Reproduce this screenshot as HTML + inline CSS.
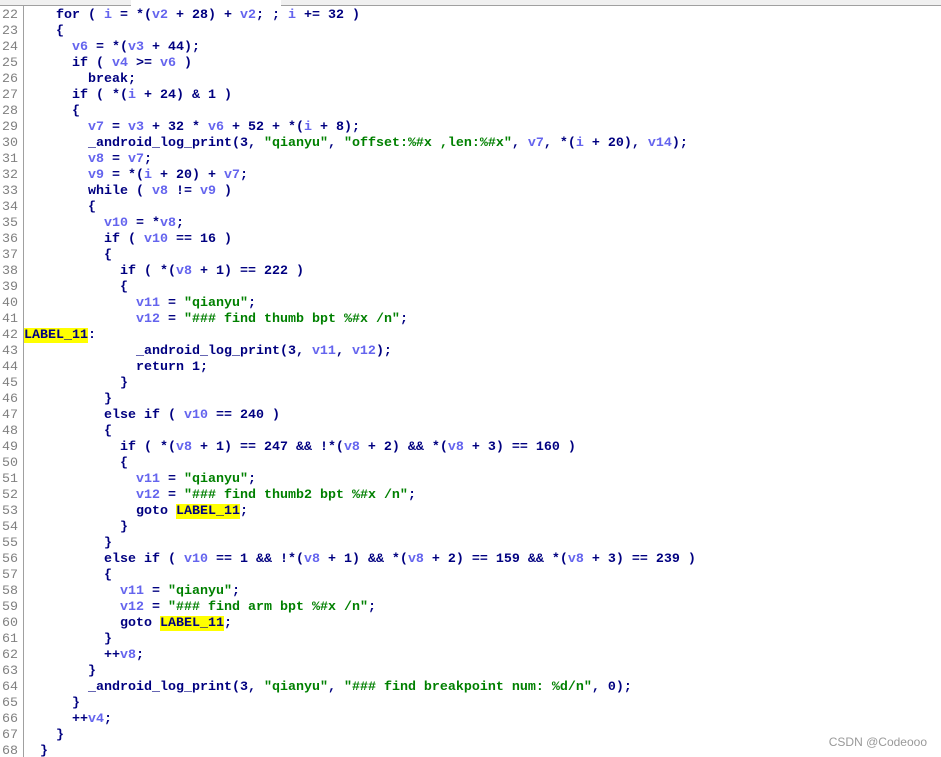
<!DOCTYPE html>
<html><head><meta charset="utf-8"><style>
html,body{margin:0;padding:0;background:#fff;width:941px;height:757px;overflow:hidden;position:relative}
.tabs{position:absolute;left:0;top:0;width:941px;height:5px;background:#f0f0f0;border-bottom:1px solid #a0a0a0}
.tabs .act{position:absolute;left:131px;top:0;width:150px;height:6px;background:#fff}
.gut{position:absolute;left:23px;top:6px;width:1px;height:751px;background:#a0a0a0}
.code{position:absolute;left:0;top:8px;font-family:"Liberation Mono",monospace;font-size:13.33px;font-weight:bold;line-height:16px;color:#000080;white-space:pre}
.ln{display:inline-block;width:24px;color:#808080;font-weight:normal;text-align:left;padding-left:2px;box-sizing:border-box}
.v{color:#6464ee}
.s{color:#008000}
.l{background:#ffff00}
.wm{position:absolute;right:14px;top:735px;font-family:"Liberation Sans",sans-serif;font-size:12px;color:#999}
</style></head><body>
<div class="tabs"><div class="act"></div></div>
<div class="gut"></div>
<div class="code"><span class="ln">22</span>    for ( <span class="v">i</span> = *(<span class="v">v2</span> + 28) + <span class="v">v2</span>; ; <span class="v">i</span> += 32 )
<span class="ln">23</span>    {
<span class="ln">24</span>      <span class="v">v6</span> = *(<span class="v">v3</span> + 44);
<span class="ln">25</span>      if ( <span class="v">v4</span> &gt;= <span class="v">v6</span> )
<span class="ln">26</span>        break;
<span class="ln">27</span>      if ( *(<span class="v">i</span> + 24) &amp; 1 )
<span class="ln">28</span>      {
<span class="ln">29</span>        <span class="v">v7</span> = <span class="v">v3</span> + 32 * <span class="v">v6</span> + 52 + *(<span class="v">i</span> + 8);
<span class="ln">30</span>        _android_log_print(3, <span class="s">"qianyu"</span>, <span class="s">"offset:%#x ,len:%#x"</span>, <span class="v">v7</span>, *(<span class="v">i</span> + 20), <span class="v">v14</span>);
<span class="ln">31</span>        <span class="v">v8</span> = <span class="v">v7</span>;
<span class="ln">32</span>        <span class="v">v9</span> = *(<span class="v">i</span> + 20) + <span class="v">v7</span>;
<span class="ln">33</span>        while ( <span class="v">v8</span> != <span class="v">v9</span> )
<span class="ln">34</span>        {
<span class="ln">35</span>          <span class="v">v10</span> = *<span class="v">v8</span>;
<span class="ln">36</span>          if ( <span class="v">v10</span> == 16 )
<span class="ln">37</span>          {
<span class="ln">38</span>            if ( *(<span class="v">v8</span> + 1) == 222 )
<span class="ln">39</span>            {
<span class="ln">40</span>              <span class="v">v11</span> = <span class="s">"qianyu"</span>;
<span class="ln">41</span>              <span class="v">v12</span> = <span class="s">"### find thumb bpt %#x /n"</span>;
<span class="ln">42</span><span class="l">LABEL_11</span>:
<span class="ln">43</span>              _android_log_print(3, <span class="v">v11</span>, <span class="v">v12</span>);
<span class="ln">44</span>              return 1;
<span class="ln">45</span>            }
<span class="ln">46</span>          }
<span class="ln">47</span>          else if ( <span class="v">v10</span> == 240 )
<span class="ln">48</span>          {
<span class="ln">49</span>            if ( *(<span class="v">v8</span> + 1) == 247 &amp;&amp; !*(<span class="v">v8</span> + 2) &amp;&amp; *(<span class="v">v8</span> + 3) == 160 )
<span class="ln">50</span>            {
<span class="ln">51</span>              <span class="v">v11</span> = <span class="s">"qianyu"</span>;
<span class="ln">52</span>              <span class="v">v12</span> = <span class="s">"### find thumb2 bpt %#x /n"</span>;
<span class="ln">53</span>              goto <span class="l">LABEL_11</span>;
<span class="ln">54</span>            }
<span class="ln">55</span>          }
<span class="ln">56</span>          else if ( <span class="v">v10</span> == 1 &amp;&amp; !*(<span class="v">v8</span> + 1) &amp;&amp; *(<span class="v">v8</span> + 2) == 159 &amp;&amp; *(<span class="v">v8</span> + 3) == 239 )
<span class="ln">57</span>          {
<span class="ln">58</span>            <span class="v">v11</span> = <span class="s">"qianyu"</span>;
<span class="ln">59</span>            <span class="v">v12</span> = <span class="s">"### find arm bpt %#x /n"</span>;
<span class="ln">60</span>            goto <span class="l">LABEL_11</span>;
<span class="ln">61</span>          }
<span class="ln">62</span>          ++<span class="v">v8</span>;
<span class="ln">63</span>        }
<span class="ln">64</span>        _android_log_print(3, <span class="s">"qianyu"</span>, <span class="s">"### find breakpoint num: %d/n"</span>, 0);
<span class="ln">65</span>      }
<span class="ln">66</span>      ++<span class="v">v4</span>;
<span class="ln">67</span>    }
<span class="ln">68</span>  }</div>
<div class="wm">CSDN @Codeooo</div>
</body></html>
